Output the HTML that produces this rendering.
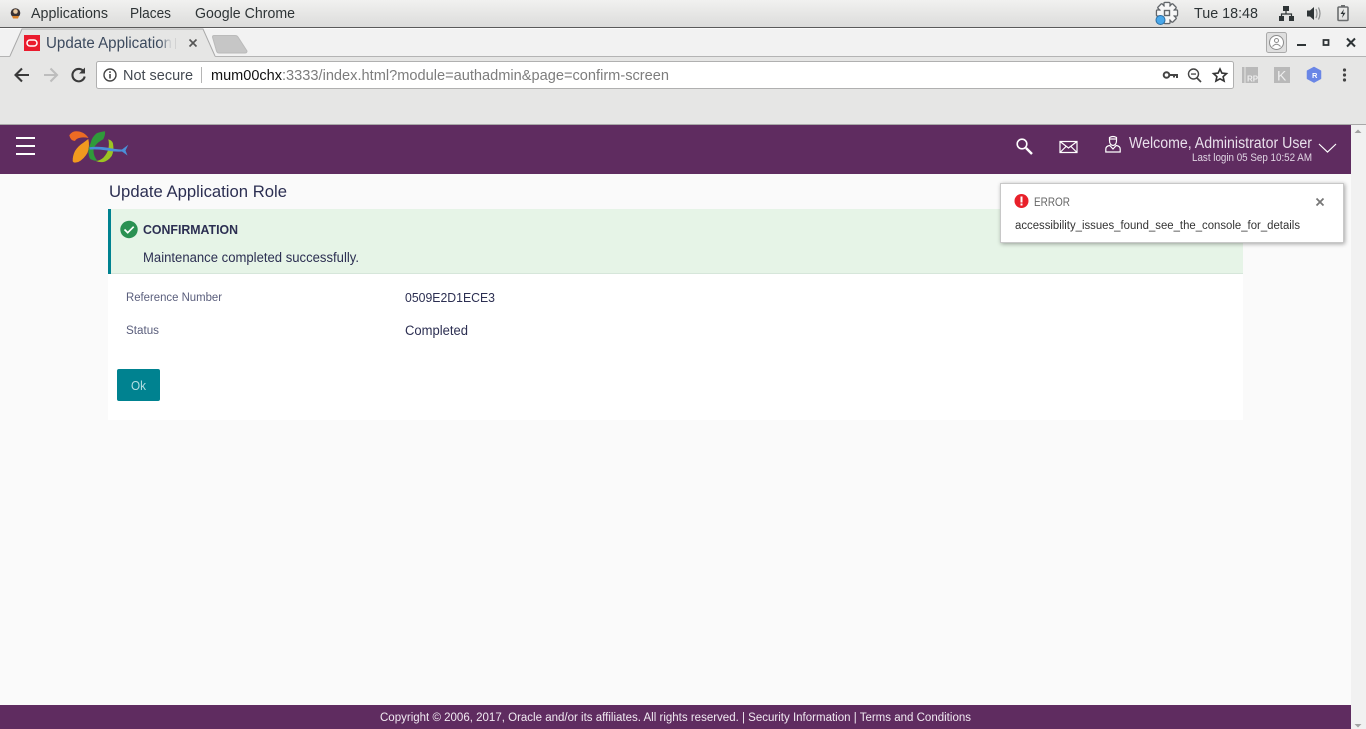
<!DOCTYPE html>
<html lang="en"><head><meta charset="utf-8"><title>Update Application Role</title>
<style>
html,body{margin:0;padding:0;width:1366px;height:729px;overflow:hidden;background:#fafafa}
svg{display:block}
text{font-family:"Liberation Sans",sans-serif;white-space:pre}
</style></head><body>
<svg width="1366" height="729" viewBox="0 0 1366 729" xmlns="http://www.w3.org/2000/svg">
<defs>
<linearGradient id="top" x1="0" y1="0" x2="0" y2="1"><stop offset="0" stop-color="#f1f1f0"/><stop offset="1" stop-color="#dcdcdb"/></linearGradient>
<linearGradient id="fade" x1="0" y1="0" x2="1" y2="0"><stop offset="0" stop-color="#e6e6e5" stop-opacity="0"/><stop offset="1" stop-color="#e6e6e5"/></linearGradient>
</defs>
<!-- GNOME top bar -->
<rect width="1366" height="27" fill="url(#top)"/>
<rect y="27" width="1366" height="1" fill="#5a5a5a"/>
<circle cx="15.500" cy="13" r="4.800" fill="#3b3333"/><circle cx="15.500" cy="11.500" r="2.300" fill="#e8c9a0"/><path d="M12 16h7l-1 2.500h-5z" fill="#d9822b"/>
<text x="31" y="18" font-size="14.500" fill="#2e3436" textLength="77" lengthAdjust="spacingAndGlyphs">Applications</text>
<text x="130" y="18" font-size="14.500" fill="#2e3436" textLength="41" lengthAdjust="spacingAndGlyphs">Places</text>
<text x="195" y="18" font-size="14.500" fill="#2e3436" textLength="100" lengthAdjust="spacingAndGlyphs">Google Chrome</text>
<!-- tray: gear -->
<g transform="translate(1167 13)">
<g fill="#f6f6f6" stroke="#62666a" stroke-width="1.400">
<rect x="-3" y="-10.500" width="6" height="21" rx="1"/>
<rect x="-3" y="-10.500" width="6" height="21" rx="1" transform="rotate(45)"/>
<rect x="-3" y="-10.500" width="6" height="21" rx="1" transform="rotate(90)"/>
<rect x="-3" y="-10.500" width="6" height="21" rx="1" transform="rotate(135)"/>
<circle r="7.500"/>
</g>
<g fill="#f6f6f6">
<rect x="-2.300" y="-9.800" width="4.600" height="19.600"/>
<rect x="-2.300" y="-9.800" width="4.600" height="19.600" transform="rotate(45)"/>
<rect x="-2.300" y="-9.800" width="4.600" height="19.600" transform="rotate(90)"/>
<rect x="-2.300" y="-9.800" width="4.600" height="19.600" transform="rotate(135)"/>
</g>
<rect x="-2.500" y="-2.500" width="5" height="5" fill="none" stroke="#62666a" stroke-width="1.400"/>
</g>
<circle cx="1160.500" cy="20" r="4.500" fill="#4aa8ea" stroke="#2b6ea3" stroke-width="1"/>
<text x="1194" y="18" font-size="14.500" fill="#2e3436" textLength="64" lengthAdjust="spacingAndGlyphs">Tue 18:48</text>
<path d="M1283 6h6v5h-6zM1279 16h5v5h-5zM1289 16h5v5h-5z" fill="#2e3436"/><path d="M1286 11v3M1281.500 16v-2h10v2" fill="none" stroke="#2e3436" stroke-width="1.200"/>
<path d="M1307 10.500h3l4-3.500v13l-4-3.500h-3z" fill="#2e3436"/><path d="M1316 9q2 4.500 0 9M1318.500 7.500q3 6 0 12" fill="none" stroke="#8a8d8e" stroke-width="1.200"/>
<rect x="1338" y="7" width="10" height="13.500" rx="1" fill="none" stroke="#6a6d6e" stroke-width="1.600"/><rect x="1341" y="5" width="4" height="2" fill="#6a6d6e"/><path d="M1344 9l-3.500 5h2.500l-1 4 3.500-5.200h-2.500z" fill="#2e3436"/>
<!-- Tab strip -->
<rect y="28" width="1366" height="28" fill="#f2f2f2"/>
<rect y="28" width="1366" height="1" fill="#fbfbfb"/>
<rect y="56" width="1366" height="1" fill="#b4b4b4"/>
<path d="M10 57L22 29H203L215 57z" fill="#e6e6e5"/>
<path d="M10 56L22 29H203L215 56" fill="none" stroke="#a9a9a9" stroke-width="1"/>
<rect x="24" y="35" width="16" height="16" fill="#ea1b2d"/>
<rect x="27" y="40" width="10" height="6" rx="3" fill="none" stroke="#fff" stroke-width="1.500"/>
<text x="46" y="48" font-size="15.500" fill="#3c4a5e" textLength="126" lengthAdjust="spacingAndGlyphs">Update Application</text>
<rect x="160" y="30" width="12" height="25" fill="url(#fade)"/>
<rect x="175" y="38" width="1" height="11" fill="#d2d2d2"/>
<path d="M189.500 39.500l7 7M196.500 39.500l-7 7" stroke="#555" stroke-width="1.600"/>
<path d="M214 35.500h21q2 0 3 1.500l9 14q0 2-2 2h-26q-2 0-2.500-2l-4-14q0-1.500 1.500-1.500z" fill="#c6c6c6" stroke="#bbb"/>
<!-- window controls -->
<rect x="1266.500" y="32.500" width="20" height="20" rx="2" fill="#dfdfdf" stroke="#aaa"/>
<circle cx="1276.500" cy="42.500" r="7" fill="#fff" stroke="#8c8c8c"/><circle cx="1276.500" cy="40.500" r="2" fill="none" stroke="#8c8c8c"/><path d="M1272.500 46.500q4-4.500 8 0" fill="none" stroke="#8c8c8c"/>
<rect x="1297" y="44" width="9" height="2" fill="#2e3436"/>
<rect x="1323.500" y="40" width="5" height="5" fill="none" stroke="#2e3436" stroke-width="1.800"/>
<path d="M1347 38.500l8 8M1355 38.500l-8 8" stroke="#2e3436" stroke-width="2"/>
<!-- Toolbar -->
<rect y="57" width="1366" height="67" fill="#e6e6e5"/>
<rect y="124" width="1366" height="1" fill="#a8a8a8"/>
<path d="M29 75H16M22 68.500l-6.500 6.500 6.500 6.500" fill="none" stroke="#3a3a3a" stroke-width="2.100"/>
<path d="M44 75H57M50.500 68.500l6.500 6.500-6.500 6.500" fill="none" stroke="#bdbdbd" stroke-width="2.100"/>
<path d="M84 72a6.200 6.200 0 1 0 .7 4.500" fill="none" stroke="#3a3a3a" stroke-width="2.100"/><path d="M85 67.500v6h-6z" fill="#3a3a3a"/>
<rect x="96.500" y="61.500" width="1137" height="27" rx="2" fill="#fff" stroke="#b0b0b0"/>
<circle cx="110" cy="75" r="6" fill="none" stroke="#444" stroke-width="1.400"/><rect x="109.200" y="74" width="1.600" height="4.500" fill="#444"/><rect x="109.200" y="71.300" width="1.600" height="1.600" fill="#444"/>
<text x="123" y="80" font-size="14.500" fill="#444a52" textLength="70" lengthAdjust="spacingAndGlyphs">Not secure</text>
<rect x="201" y="67" width="1" height="16" fill="#b5b5b5"/>
<text x="211" y="80" font-size="14.500" fill="#111" textLength="71" lengthAdjust="spacingAndGlyphs">mum00chx</text>
<text x="282" y="80" font-size="14.500" fill="#7d7d7d" textLength="387" lengthAdjust="spacingAndGlyphs">:3333/index.html?module=authadmin&amp;page=confirm-screen</text>
<circle cx="1166.500" cy="75" r="2.800" fill="none" stroke="#444" stroke-width="2"/><path d="M1169 75h8v3M1174 75v2.500" fill="none" stroke="#444" stroke-width="2"/>
<circle cx="1193.500" cy="74" r="5" fill="none" stroke="#444" stroke-width="1.400"/><path d="M1197 78l4 4" stroke="#444" stroke-width="1.700"/><rect x="1191" y="73.400" width="5" height="1.300" fill="#444"/>
<path d="M1220 69l1.900 4.100 4.600.5-3.400 3 1 4.500-4.100-2.300-4.100 2.300 1-4.500-3.400-3 4.600-.5z" fill="none" stroke="#333" stroke-width="1.600"/>
<rect x="1242" y="67" width="16" height="16" fill="#b9b9b9"/><rect x="1244.500" y="67" width="1" height="16" fill="#e6e6e5"/>
<text x="1247" y="81.500" font-size="8" font-weight="700" fill="#eee">RP</text>
<rect x="1274" y="67" width="16" height="16" fill="#b9b9b9"/>
<text x="1277" y="80.500" font-size="14" fill="#eee">K</text>
<path d="M1314 67.500l6.500 3.500v7.500l-6.500 3.500-6.500-3.500v-7.500z" fill="#6a86e6" stroke="#6a86e6" stroke-width="1.500" stroke-linejoin="round"/>
<text x="1312" y="78" font-size="7.500" font-weight="700" fill="#fff">R</text>
<circle cx="1344.500" cy="70" r="1.600" fill="#444"/><circle cx="1344.500" cy="75" r="1.600" fill="#444"/><circle cx="1344.500" cy="80" r="1.600" fill="#444"/>
<!-- Page -->
<rect x="0" y="125" width="1351" height="580" fill="#fafafa"/>
<rect x="1351" y="125" width="15" height="604" fill="#f1f1f1"/>
<path d="M1354.500 133l3.500-3.500 3.500 3.500z" fill="#a3a3a3"/>
<path d="M1354.500 724l3.500 3.500 3.500-3.500z" fill="#a3a3a3"/>
<!-- App header -->
<rect x="0" y="125" width="1351" height="49" fill="#5f2c60"/>
<rect x="16" y="137" width="19" height="2" fill="#fff"/><rect x="16" y="145" width="19" height="2" fill="#fff"/><rect x="16" y="153" width="19" height="2" fill="#fff"/>
<!-- logo -->
<path d="M69.300 135.300Q72 131.300 76 131.300Q84 131.300 88.500 138Q84 137 80 137.700Q76 138.500 75 141Q70.500 141 69.300 135.300z" fill="#ec6b24"/>
<path d="M88.300 139Q90 146 87.500 152.700Q84 159 78.300 162Q73 163.500 72.700 161Q72.500 156 75 151Q78 146 83.300 142.700z" fill="#f29a1f"/>
<path d="M105 131.300Q100 132 96.700 133.300Q92 137 90.700 142.700Q87.500 150 88.700 154.300Q89 158 90.700 159.300Q94 161 97.300 160.700Q93.500 156 93.500 151Q93.500 148 95 146Q98 142 103.300 139.300Q105.500 135 105 131.300z" fill="#2f9a3a"/>
<path d="M108.300 139.300Q113.500 141 113.300 146Q114 151 111.700 156Q108 161 103.300 162Q99 162.500 96 161Q100 160.500 103.300 157.700Q107 154 108.300 149.300Q109.500 144 108.300 139.300z" fill="#9cc322"/>
<path d="M89.300 147.200Q98 146 108 147.800Q116 149.500 122 149.500L128.300 144.800L125.500 150.500L127.500 155.500L122 151.500Q114 152 107 150.500Q98 149 89.800 149.500z" fill="#4a8fd8"/>
<!-- search, mail, user -->
<circle cx="1022" cy="144" r="4.800" fill="none" stroke="#fff" stroke-width="1.600"/><path d="M1026 148l6 6" stroke="#fff" stroke-width="2.400"/>
<path d="M1060 141.500h17v11h-17zM1060 141.500l8.500 6.500 8.500-6.500M1060 152.500l6-6M1077 152.500l-6-6" fill="none" stroke="#fff" stroke-width="1.200"/>
<path d="M1109.500 137.500q3.500-2 7 0v3q0 4.500-3.500 5-3.500-.5-3.500-5z" fill="none" stroke="#fff" stroke-width="1.200"/><path d="M1109 139h8" stroke="#fff" stroke-width="1.200"/>
<path d="M1105.800 152v-3q0-2.800 4-3.500l3.200 3.500 3.200-3.500q4 .7 4 3.500v3z" fill="none" stroke="#fff" stroke-width="1.200"/>
<text x="1129" y="148" font-size="15.500" fill="#e9e0ec" textLength="183" lengthAdjust="spacingAndGlyphs">Welcome, Administrator User</text>
<text x="1192" y="161" font-size="11" fill="#e0d5e3" textLength="120" lengthAdjust="spacingAndGlyphs">Last login 05 Sep 10:52 AM</text>
<path d="M1319 144l8.500 8 8.500-8" fill="none" stroke="#fff" stroke-width="1.200"/>
<!-- Content -->
<text x="109" y="197" font-size="17" fill="#2c2f52" textLength="178" lengthAdjust="spacingAndGlyphs">Update Application Role</text>
<rect x="108" y="209" width="1135" height="211" fill="#fff"/>
<rect x="108" y="209" width="1135" height="64" fill="#e6f4e7"/>
<rect x="108" y="273" width="1135" height="1" fill="#d6e6da"/>
<rect x="108" y="209" width="3" height="65" fill="#008290"/>
<circle cx="129" cy="229.500" r="8.700" fill="#2a9152"/>
<path d="M124.500 229.500l3.200 3.200 6-6" fill="none" stroke="#fff" stroke-width="1.700"/>
<text x="143" y="234" font-size="13" font-weight="700" fill="#2c2f52" textLength="95" lengthAdjust="spacingAndGlyphs">CONFIRMATION</text>
<text x="143" y="262" font-size="13.500" fill="#2c2f52" textLength="216" lengthAdjust="spacingAndGlyphs">Maintenance completed successfully.</text>
<text x="126" y="301" font-size="11.500" fill="#5a5e7c" textLength="96" lengthAdjust="spacingAndGlyphs">Reference Number</text>
<text x="405" y="302" font-size="13" fill="#2c2f52" textLength="90" lengthAdjust="spacingAndGlyphs">0509E2D1ECE3</text>
<text x="126" y="334" font-size="11.500" fill="#5a5e7c" textLength="33" lengthAdjust="spacingAndGlyphs">Status</text>
<text x="405" y="335" font-size="13.500" fill="#2c2f52" textLength="63" lengthAdjust="spacingAndGlyphs">Completed</text>
<rect x="117" y="369" width="43" height="32" rx="2" fill="#008290"/>
<text x="131" y="390" font-size="13" fill="#b5dfe3" textLength="15" lengthAdjust="spacingAndGlyphs">Ok</text>
<!-- Toast -->
<rect x="1000.500" y="183.500" width="343" height="59" fill="#fff" stroke="#c8c8c8" style="filter:drop-shadow(1px 1px 2px rgba(0,0,0,.35))"/>
<circle cx="1021.500" cy="201" r="7" fill="#e8202a"/>
<rect x="1020.500" y="196.500" width="2" height="6" fill="#fff"/><rect x="1020.500" y="203.500" width="2" height="2" fill="#fff"/>
<text x="1034" y="206" font-size="11.500" fill="#666" textLength="36" lengthAdjust="spacingAndGlyphs">ERROR</text>
<path d="M1316.500 198.500l7 7M1323.500 198.500l-7 7" stroke="#777" stroke-width="1.800"/>
<text x="1015" y="229" font-size="11.500" fill="#333" textLength="285" lengthAdjust="spacingAndGlyphs">accessibility_issues_found_see_the_console_for_details</text>
<!-- Footer -->
<rect x="0" y="705" width="1351" height="24" fill="#5f2c60"/>
<text x="380" y="721" font-size="11.500" fill="#f1eaf2" textLength="591" lengthAdjust="spacingAndGlyphs">Copyright © 2006, 2017, Oracle and/or its affiliates. All rights reserved. | Security Information | Terms and Conditions</text>
</svg>
</body></html>
